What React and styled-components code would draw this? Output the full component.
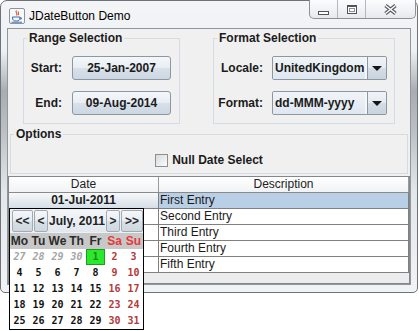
import React from 'react';
import styled, { createGlobalStyle } from 'styled-components';

const GlobalStyle = createGlobalStyle`
  html, body {
    margin: 0;
    background: #fff;
    font-family: "Liberation Sans", Arial, sans-serif;
  }
  body {
    min-height: 331px;
  }
`;

const Frame = styled.div`
  box-sizing: border-box;
  width: 418px;
  height: 293px;
  border: 1px solid #6d7378;
  border-radius: 7px 7px 5px 5px;
  padding: 0 6px 7px 6px;
  display: flex;
  flex-direction: column;
  background: linear-gradient(180deg, #f3f5f7 0, #eef1f3 50px, #a9adb1 90px, #bcc0c4 130px, #e4e7ea 190px, #f1f3f5 100%);
`;

const TitleBar = styled.div`
  height: 27px;
  display: flex;
  align-items: flex-start;
  flex-shrink: 0;
`;

const AppIcon = styled.svg`
  margin: 7px 0 0 2px;
  flex-shrink: 0;
`;

const WindowTitle = styled.div`
  margin: 8px 0 0 4px;
  font-size: 12px;
  line-height: 14px;
  color: #000;
`;

const CaptionGroup = styled.div`
  margin: -1px -5px 0 auto;
  display: flex;
  height: 18px;
  border: 1px solid #8c9196;
  border-top: none;
  border-radius: 0 0 5px 5px;
  overflow: hidden;
  background: linear-gradient(180deg, #fbfcfd, #e7eaed);
`;

const CaptionButton = styled.div`
  width: ${p => p.$w}px;
  display: flex;
  align-items: center;
  justify-content: center;
  & + & {
    border-left: 1px solid #b3b8bd;
  }
`;

const MinGlyph = styled.div`
  width: 11px;
  height: 4px;
  box-sizing: border-box;
  border: 1px solid #50555a;
  background: #fff;
  margin-top: 7px;
`;

const MaxGlyph = styled.div`
  width: 10px;
  height: 9px;
  box-sizing: border-box;
  border: 1px solid #50555a;
  border-top-width: 2px;
  background: #fff;
  box-shadow: inset 0 0 0 1px #fff, inset 0 0 0 2px #8a8f94;
`;

const Client = styled.div`
  flex: 1;
  min-height: 0;
  border: 1px solid #8f969c;
  background: #f0f0f0;
  display: flex;
  flex-direction: column;
`;

const TopRow = styled.div`
  display: flex;
  justify-content: center;
  gap: 33px;
  margin-top: 2px;
`;

const Group = styled.fieldset`
  box-sizing: border-box;
  width: ${p => (p.$width ? `${p.$width}px` : 'auto')};
  margin: 0;
  padding: 0;
  min-width: 0;
  border: 1px solid #d3dce2;
`;

const OptionsGroup = styled(Group)`
  margin: 3px 2px 0;
`;

const GroupTitle = styled.legend`
  margin-left: 3px;
  padding: 0 2px;
  font-size: 12px;
  font-weight: bold;
  line-height: 14px;
  color: #1b1b1b;
`;

const FormGrid = styled.div`
  display: grid;
  grid-template-columns: ${p => p.$label}px ${p => p.$field}px;
  column-gap: ${p => p.$gap}px;
  row-gap: 11px;
  align-items: center;
  padding: 11px 0 8px ${p => p.$left}px;
`;

const FieldLabel = styled.span`
  justify-self: end;
  font-size: 12px;
  font-weight: bold;
  color: #1b1b1b;
  white-space: nowrap;
`;

const DateButton = styled.button`
  box-sizing: border-box;
  height: 24px;
  padding: 0;
  border: 1px solid #8b97a3;
  border-radius: 3px;
  background: linear-gradient(180deg, #f4f7fa 0, #e9eef3 48%, #d8e1ea 52%, #cdd7e1 100%);
  font-family: inherit;
  font-size: 12px;
  font-weight: bold;
  color: #1b1b1b;
`;

const Combo = styled.div`
  box-sizing: border-box;
  height: 24px;
  display: flex;
  border: 1px solid #8b97a3;
  border-radius: 2px;
  overflow: hidden;
`;

const ComboText = styled.div`
  flex: 1;
  padding-left: 2px;
  line-height: 22px;
  font-size: 12px;
  font-weight: bold;
  color: #1b1b1b;
  white-space: nowrap;
  background: linear-gradient(180deg, #f0f4f8, #dfe7ef);
`;

const ComboArrow = styled.div`
  width: 19px;
  border-left: 2px solid #f4f6f8;
  display: flex;
  align-items: center;
  justify-content: center;
  background: linear-gradient(180deg, #f1f4f7 0, #e6ebf0 48%, #d5dee7 52%, #c9d3dd 100%);
  box-shadow: inset 1px 0 0 #8b97a3;

  &::after {
    content: "";
    border-left: 5px solid transparent;
    border-right: 5px solid transparent;
    border-top: 5px solid #161616;
  }
`;

const CheckRow = styled.div`
  display: flex;
  justify-content: center;
  align-items: center;
  gap: 4px;
  height: 16px;
  padding: 11px 0 5px;
`;

const CheckBox = styled.span`
  box-sizing: border-box;
  width: 13px;
  height: 13px;
  border: 1px solid #8e8f8f;
  background: linear-gradient(135deg, #d8dadc, #fbfbfb);
`;

const CheckLabel = styled.span`
  font-size: 12px;
  font-weight: bold;
  color: #1b1b1b;
`;

const ScrollPane = styled.div`
  position: relative;
  flex: 1;
  margin-top: 2px;
  border: 1px solid #828790;
  background: #ececec;
`;

const HeaderRow = styled.div`
  display: grid;
  grid-template-columns: 150px 1fr;
  border-bottom: 1px solid #8a8a8a;
`;

const HeaderCell = styled.div`
  height: 15px;
  line-height: 15px;
  text-align: center;
  font-size: 12px;
  color: #222;
  background: linear-gradient(180deg, #ffffff, #f1f2f4);
  border-right: 1px solid #9a9a9a;
`;

const Row = styled.div`
  display: grid;
  grid-template-columns: 150px 1fr;
  border-bottom: 1px solid #808080;
  background: #fff;
`;

const Cell = styled.div`
  height: 15px;
  line-height: 15px;
  padding-left: 1px;
  font-size: 12px;
  color: #1a1a1a;
  border-right: 1px solid #808080;
  background: ${p => (p.$selected ? '#b9cfe6' : '#fff')};
  white-space: nowrap;
`;

const DateCell = styled(Cell)`
  padding-left: 0;
  text-align: center;
  font-weight: bold;
  background: ${p => (p.$selected ? 'linear-gradient(180deg, #f7f9fb, #d6dee6)' : '#fff')};
`;

const Popup = styled.div`
  position: absolute;
  left: 0;
  top: 31px;
  z-index: 2;
  box-sizing: border-box;
  width: 135px;
  border: 1px solid #000;
  background: #fff;
`;

const NavRow = styled.div`
  display: flex;
  box-sizing: border-box;
  height: 24px;
  padding: 1px 0 1px 2px;
  background: #eef1f4;
`;

const NavButton = styled.button`
  box-sizing: border-box;
  width: ${p => p.$w}px;
  height: 22px;
  margin-right: ${p => p.$gap || 0}px;
  padding: 0;
  border: 1px solid #a2abb4;
  border-radius: 2px;
  background: linear-gradient(180deg, #f5f7f9 0, #e8edf2 48%, #d9e0e7 52%, #ced7df 100%);
  font-family: inherit;
  font-size: 12px;
  font-weight: bold;
  color: #2a2a2a;
`;

const MonthLabel = styled.div`
  width: 58px;
  line-height: 22px;
  text-align: center;
  font-size: 12px;
  font-weight: bold;
  color: #222;
  background: linear-gradient(180deg, #f3f6f9, #e1e7ed);
  white-space: nowrap;
`;

const DayNames = styled.div`
  display: grid;
  grid-template-columns: repeat(7, 19px);
  height: 16px;
  background: #c8c8c8;
`;

const DayName = styled.div`
  text-align: center;
  line-height: 16px;
  font-size: 12px;
  font-weight: bold;
  color: ${p => (p.$weekend ? '#e6383b' : '#2b2b2b')};
`;

const DayGrid = styled.div`
  display: grid;
  grid-template-columns: repeat(7, 19px);
  grid-auto-rows: 16px;
`;

const dayColors = {
  prev: '#a6a6a6',
  weekend: '#b33a3a',
  normal: '#111',
  selected: '#158d15',
};

const Day = styled.div`
  text-align: center;
  line-height: 16px;
  font-family: "DejaVu Sans Mono", "Liberation Mono", monospace;
  font-size: 10px;
  font-weight: bold;
  font-style: ${p => (p.$kind === 'prev' ? 'italic' : 'normal')};
  color: ${p => dayColors[p.$kind]};
  background: ${p => (p.$kind === 'selected' ? '#2ce82c' : 'transparent')};
  box-shadow: ${p => (p.$kind === 'selected' ? 'inset 0 0 0 1px #1c9f1c' : 'none')};
`;

const entries = ['First Entry', 'Second Entry', 'Third Entry', 'Fourth Entry', 'Fifth Entry'];
const dayNames = ['Mo', 'Tu', 'We', 'Th', 'Fr', 'Sa', 'Su'];

const weeks = [
  [27, 28, 29, 30, 1, 2, 3],
  [4, 5, 6, 7, 8, 9, 10],
  [11, 12, 13, 14, 15, 16, 17],
  [18, 19, 20, 21, 22, 23, 24],
  [25, 26, 27, 28, 29, 30, 31],
];

function dayKind(week, col) {
  if (week === 0 && col < 4) return 'prev';
  if (week === 0 && col === 4) return 'selected';
  if (col >= 5) return 'weekend';
  return 'normal';
}

function JavaIcon() {
  return (
    <AppIcon width="16" height="16" viewBox="0 0 16 16">
      <rect x="0.5" y="0.5" width="15" height="15" rx="1.5" fill="#f7f9fb" stroke="#8796a6" />
      <path d="M7.5 2.5 C5.5 4.5 9.5 5 7.5 7.5 M9.5 3.5 C8.5 5 10.5 5.5 9 7" stroke="#e0521e" strokeWidth="1.1" fill="none" />
      <path d="M3.5 9 H11 V10 C11 12 9.5 13 7.2 13 C5 13 3.5 12 3.5 10 Z M11 9.8 H12.3 V11 H11" stroke="#3d6db0" strokeWidth="1" fill="none" />
      <path d="M2.5 14.2 H13" stroke="#3d6db0" strokeWidth="1" />
    </AppIcon>
  );
}

function CloseGlyph() {
  return (
    <svg width="15" height="11" viewBox="0 0 15 11">
      <path d="M2.5 1.5 L12.5 9.5 M12.5 1.5 L2.5 9.5" stroke="#55595e" strokeWidth="3.6" />
      <path d="M2.5 1.5 L12.5 9.5 M12.5 1.5 L2.5 9.5" stroke="#fff" strokeWidth="1.5" />
    </svg>
  );
}

export default function App() {
  return (
    <>
      <GlobalStyle />
      <Frame>
        <TitleBar>
          <JavaIcon />
          <WindowTitle>JDateButton Demo</WindowTitle>
          <CaptionGroup>
            <CaptionButton $w={27}><MinGlyph /></CaptionButton>
            <CaptionButton $w={27}><MaxGlyph /></CaptionButton>
            <CaptionButton $w={49}><CloseGlyph /></CaptionButton>
          </CaptionGroup>
        </TitleBar>
        <Client>
          <TopRow>
            <Group $width={157}>
              <GroupTitle>Range Selection</GroupTitle>
              <FormGrid $label={34} $field={99} $gap={10} $left={4}>
                <FieldLabel>Start:</FieldLabel>
                <DateButton>25-Jan-2007</DateButton>
                <FieldLabel>End:</FieldLabel>
                <DateButton>09-Aug-2014</DateButton>
              </FormGrid>
            </Group>
            <Group $width={182}>
              <GroupTitle>Format Selection</GroupTitle>
              <FormGrid $label={46} $field={115} $gap={9} $left={3}>
                <FieldLabel>Locale:</FieldLabel>
                <Combo>
                  <ComboText>UnitedKingdom</ComboText>
                  <ComboArrow />
                </Combo>
                <FieldLabel>Format:</FieldLabel>
                <Combo>
                  <ComboText>dd-MMM-yyyy</ComboText>
                  <ComboArrow />
                </Combo>
              </FormGrid>
            </Group>
          </TopRow>
          <OptionsGroup>
            <GroupTitle>Options</GroupTitle>
            <CheckRow>
              <CheckBox />
              <CheckLabel>Null Date Select</CheckLabel>
            </CheckRow>
          </OptionsGroup>
          <ScrollPane>
            <HeaderRow>
              <HeaderCell>Date</HeaderCell>
              <HeaderCell>Description</HeaderCell>
            </HeaderRow>
            {entries.map((text, i) => (
              <Row key={text}>
                <DateCell $selected={i === 0}>{i === 0 ? '01-Jul-2011' : ''}</DateCell>
                <Cell $selected={i === 0}>{text}</Cell>
              </Row>
            ))}
            <Popup>
              <NavRow>
                <NavButton $w={21} $gap={1}>&lt;&lt;</NavButton>
                <NavButton $w={14}>&lt;</NavButton>
                <MonthLabel>July, 2011</MonthLabel>
                <NavButton $w={14} $gap={1}>&gt;</NavButton>
                <NavButton $w={22}>&gt;&gt;</NavButton>
              </NavRow>
              <DayNames>
                {dayNames.map((d, i) => (
                  <DayName key={d} $weekend={i >= 5}>{d}</DayName>
                ))}
              </DayNames>
              <DayGrid>
                {weeks.map((week, w) =>
                  week.map((n, c) => (
                    <Day key={`${w}-${c}`} $kind={dayKind(w, c)}>{n}</Day>
                  ))
                )}
              </DayGrid>
            </Popup>
          </ScrollPane>
        </Client>
      </Frame>
    </>
  );
}
